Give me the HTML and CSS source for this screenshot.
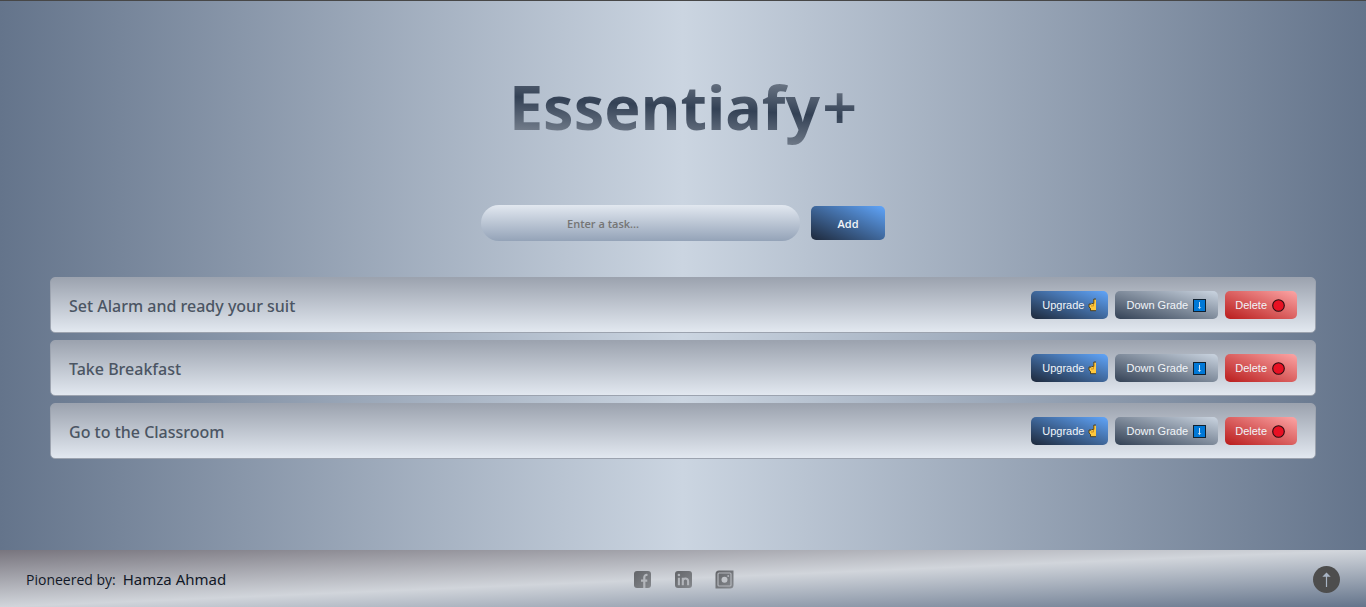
FILE: index.html
```html
<!DOCTYPE html>
<html lang="en">
<head>
<meta charset="utf-8">
<meta name="viewport" content="width=device-width, initial-scale=1">
<title>Essentiafy+</title>
<link rel="stylesheet" href="styles.css">
</head>
<body>
<svg class="defs" aria-hidden="true">
  <defs>
    <linearGradient id="metal" x1="0" y1="0" x2="1" y2="1">
      <stop offset="0" stop-color="#626468"/>
      <stop offset="1" stop-color="#85888d"/>
    </linearGradient>
    <symbol id="finger" viewBox="0 0 9 14">
      <path d="M5.500 1.500h2.500v11H2.500v-2L1 9V6.500h2.500v-1h2z" fill="#ffc83d"/>
      <path d="M8 1H5.800v4.500H3.500M3 6H1v3l1.500 1.500v2.200H8" fill="none" stroke="#4a3a14" stroke-width=".9"/>
      <path d="M5.500 5.500v2.300M3 8h2.500" stroke="#b97a16" stroke-width=".7" fill="none"/>
    </symbol>
    <symbol id="down" viewBox="0 0 13 13">
      <rect x=".5" y=".5" width="12" height="12" fill="#0078d7" stroke="#10202f"/>
      <path d="M6.500 3v6M5.200 8.300l1.300 1.300 1.300-1.300" stroke="#e3eefa" stroke-width=".9" fill="none"/>
    </symbol>
    <symbol id="stop" viewBox="0 0 13 13">
      <circle cx="6.500" cy="6.500" r="5.800" fill="#e81123" stroke="#2a0c10" stroke-width="1.100"/>
    </symbol>
  </defs>
</svg>
<main class="main">
  <h1 class="title">Essentiafy<span class="plus">+</span></h1>
  <form class="entry">
    <input class="entry-input" type="text" placeholder="Enter a task..." aria-label="Enter a task">
    <button class="btn blue add" type="button">Add</button>
  </form>
  <ul class="tasks">
    <li class="task">
      <span class="task-name">Set Alarm and ready your suit</span>
      <button class="btn blue" type="button">Upgrade <svg class="finger"><use href="#finger"/></svg></button>
      <button class="btn slate" type="button">Down Grade <svg class="mark"><use href="#down"/></svg></button>
      <button class="btn red" type="button">Delete <svg class="mark"><use href="#stop"/></svg></button>
    </li>
    <li class="task">
      <span class="task-name">Take Breakfast</span>
      <button class="btn blue" type="button">Upgrade <svg class="finger"><use href="#finger"/></svg></button>
      <button class="btn slate" type="button">Down Grade <svg class="mark"><use href="#down"/></svg></button>
      <button class="btn red" type="button">Delete <svg class="mark"><use href="#stop"/></svg></button>
    </li>
    <li class="task">
      <span class="task-name">Go to the Classroom</span>
      <button class="btn blue" type="button">Upgrade <svg class="finger"><use href="#finger"/></svg></button>
      <button class="btn slate" type="button">Down Grade <svg class="mark"><use href="#down"/></svg></button>
      <button class="btn red" type="button">Delete <svg class="mark"><use href="#stop"/></svg></button>
    </li>
  </ul>
</main>
<footer class="footer">
  <p class="credit">Pioneered by: <span class="author">Hamza Ahmad</span></p>
  <nav class="social" aria-label="Social links">
    <a href="#" aria-label="Facebook"><svg class="icon" viewBox="0 0 19 19"><rect x="1" y="1" width="17" height="17" rx="3" fill="url(#metal)"/><path d="M11.300 18v-6.500M8 10.700h6.300M11.300 12V7.500c0-1.800.8-2.700 3.200-2.500" fill="none" stroke="#b3b6bb" stroke-width="2.200"/></svg></a>
    <a href="#" aria-label="LinkedIn"><svg class="icon" viewBox="0 0 19 19"><rect x="1" y="1" width="17" height="17" rx="3" fill="url(#metal)"/><path d="M4.900 7.700v7.500M8.800 15.200V7.700M8.800 11c0-3.200 5.300-3.500 5.300 0v4.200" fill="none" stroke="#b3b6bb" stroke-width="2.100"/><circle cx="4.900" cy="5" r="1.300" fill="#b3b6bb"/></svg></a>
    <a href="#" aria-label="Instagram"><svg class="icon" viewBox="0 0 19 19"><path d="M4 .5h14.500V15a3.500 3.500 0 0 1-3.500 3.500H.5V4A3.500 3.500 0 0 1 4 .5z" fill="url(#metal)"/><rect x="3" y="3" width="13" height="13" rx="1" fill="none" stroke="#b3b6bb" stroke-width="1.200"/><circle cx="9.500" cy="9.700" r="3" fill="#c0c3c8"/><circle cx="13.200" cy="6" r=".9" fill="#b3b6bb"/></svg></a>
  </nav>
  <a class="top" href="#" aria-label="Back to top"><svg class="arrow" viewBox="0 0 27 27"><path d="M13.500 10v11" stroke="#a8b4c4" stroke-width="1.200"/><path d="M13.500 6.500l4.200 4.300h-8.400z" fill="#a8b4c4"/></svg></a>
</footer>
</body>
</html>
```

FILE: styles.css
```css
* { box-sizing: border-box; }

body {
  margin: 0;
  min-height: 100vh;
  display: flex;
  flex-direction: column;
  border-top: 1px solid #474747;
  background: linear-gradient(to right, #64748b, #cbd5e1, #64748b);
  font-family: "Noto Sans", "Open Sans", sans-serif;
}

.defs { position: absolute; width: 0; height: 0; }

.main {
  flex: 1;
  display: flex;
  flex-direction: column;
  padding: 64px 50px 0;
}

.title {
  margin: 0 -50px;
  font-size: 61px;
  font-weight: 700;
  line-height: 84px;
  text-align: center;
  color: transparent;
  background: linear-gradient(to top right, #d1d5db, #334155, #d1d5db);
  background-clip: text;
  -webkit-background-clip: text;
}

.plus {
  margin-left: 2px;
  font-weight: 600;
}

.entry {
  display: flex;
  justify-content: center;
  align-items: center;
  gap: 11px;
  margin: 56px 0 36px;
}

.entry-input {
  width: 319px;
  height: 36px;
  padding: 0 86px;
  border: 0;
  border-radius: 18px;
  background: linear-gradient(#e2e8f0, #94a3b8);
  font: 600 11px "Open Sans", sans-serif;
  color: #334155;
}

.entry-input::placeholder { color: #757575; }

.btn {
  display: flex;
  align-items: center;
  justify-content: center;
  gap: 4px;
  height: 28px;
  padding: 0 11px;
  border: 0;
  border-radius: 5px;
  color: #f1f5f9;
  font: 11px "Liberation Sans", Arial, sans-serif;
  white-space: nowrap;
}

.blue { background: linear-gradient(to top right, #1e293b, #60a5fa); }
.slate { background: linear-gradient(to top right, #334155, #cbd5e1); }
.red {
  padding: 0 11px 0 10px;
  background: linear-gradient(to top right, #b91c1c, #fca5a5);
}

.add {
  width: 74px;
  height: 34px;
  font: 600 11px "Open Sans", sans-serif;
}

.finger { width: 9px; height: 14px; }
.mark { width: 13px; height: 13px; margin: 0 1px; }

.tasks {
  display: flex;
  flex-direction: column;
  gap: 7px;
  margin: 0;
  padding: 0;
  list-style: none;
}

.task {
  display: flex;
  align-items: center;
  gap: 7px;
  height: 56px;
  padding: 2px 18px 0;
  border: 1px solid #9ca3af;
  border-radius: 5px;
  background: linear-gradient(#9ca3af, #e2e8f0);
}

.task .btn { margin-bottom: 2px; }

.task-name {
  flex: 1;
  font-size: 16px;
  font-weight: 500;
  color: #4b5563;
}

.footer {
  display: grid;
  grid-template-columns: 1fr auto 1fr;
  align-items: center;
  height: 57px;
  padding: 2px 26px 0;
  background: linear-gradient(to bottom right, #78757e, #d1d5db, #64748b);
}

.credit {
  display: flex;
  align-items: baseline;
  gap: 7px;
  margin: 0 0 2px;
  font-family: "Open Sans", sans-serif;
  font-size: 14px;
  color: #111827;
}

.author {
  font-family: "Noto Sans", sans-serif;
  font-size: 15px;
}

.social { display: flex; gap: 22px; }
.social a { display: flex; }
.icon { width: 19px; height: 19px; }

.top {
  display: flex;
  justify-self: end;
  border-radius: 50%;
  background: #4d4d4d;
}

.arrow { width: 27px; height: 27px; }
```
